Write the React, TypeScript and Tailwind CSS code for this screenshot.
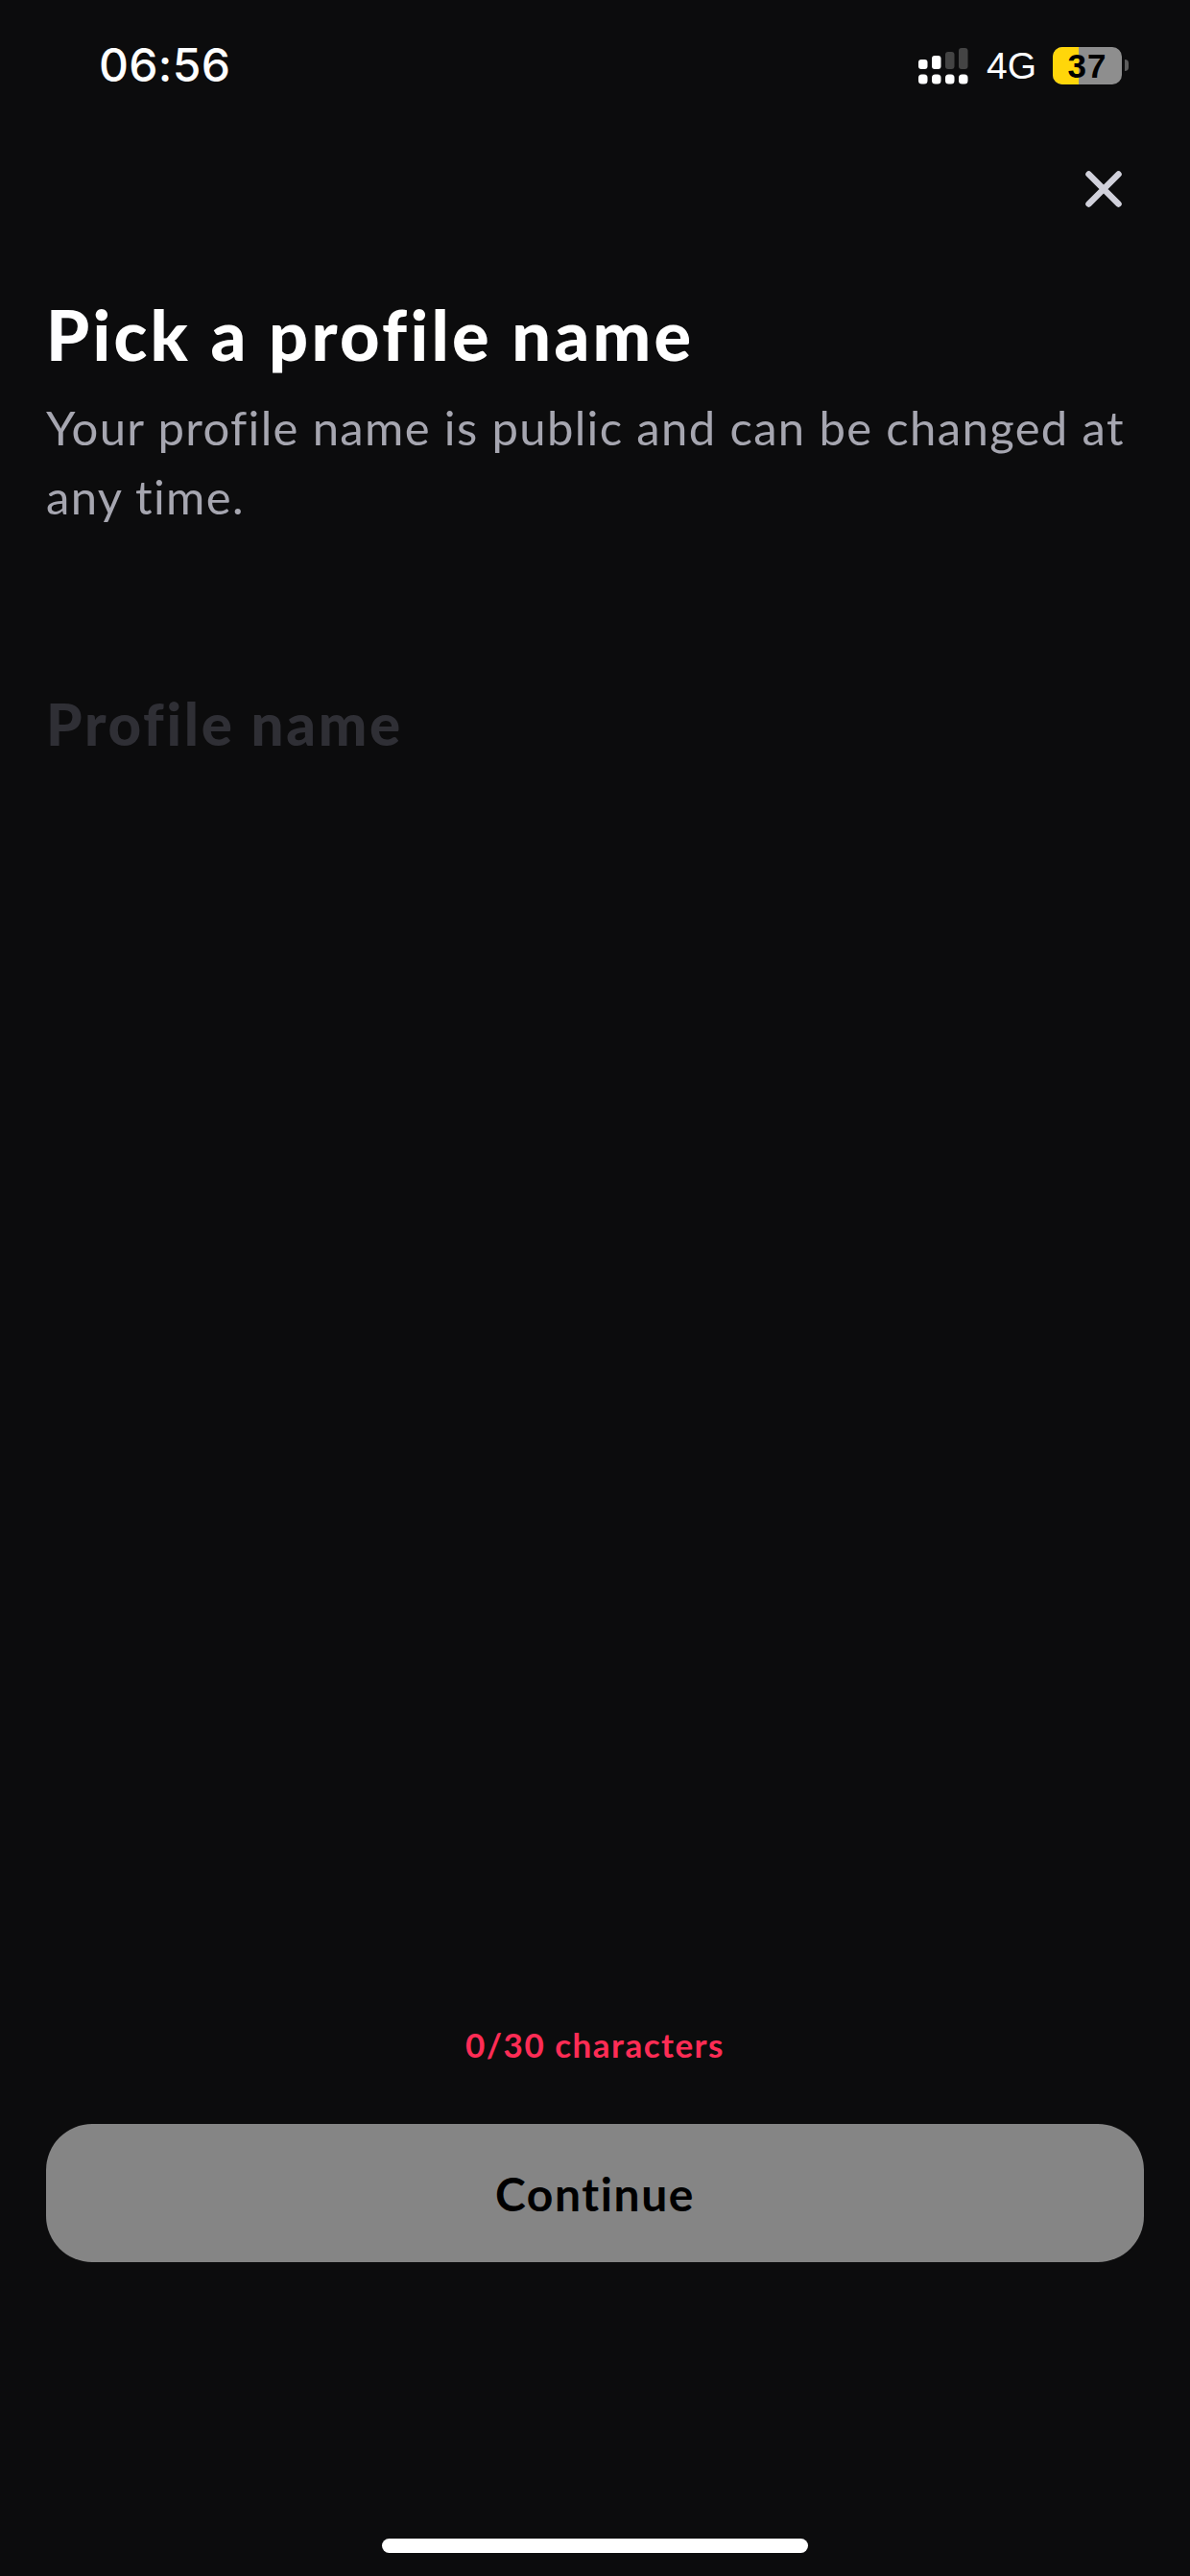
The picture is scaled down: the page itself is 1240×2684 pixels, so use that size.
const sans = "font-['Lato','Noto_Sans',sans-serif]";

function Signal() {
  return (
    <svg width="52" height="38" viewBox="0 0 52 38" className="mt-0.5">
      <rect x="0" y="12" width="9.5" height="10" rx="3" fill="#fff" />
      <rect x="14" y="8" width="9.5" height="14" rx="3" fill="#fff" />
      <rect x="28" y="4" width="9.5" height="18" rx="3" fill="#444" />
      <rect x="42" y="0" width="9.5" height="22" rx="3" fill="#444" />
      <rect x="0" y="27.5" width="9.5" height="10" rx="3.5" fill="#fff" />
      <rect x="14" y="27.5" width="9.5" height="10" rx="3.5" fill="#fff" />
      <rect x="28" y="27.5" width="9.5" height="10" rx="3.5" fill="#fff" />
      <rect x="42" y="27.5" width="9.5" height="10" rx="3.5" fill="#fff" />
    </svg>
  );
}

function Battery() {
  return (
    <div className="flex items-center gap-[3px]">
      <div className="relative flex h-[39px] w-[72px] items-center justify-center overflow-hidden rounded-[10px] bg-[#8e8e8e]">
        <div className="absolute inset-y-0 left-0 w-[27px] bg-[#ffd60a]" />
        <span className="relative font-['Liberation_Sans',sans-serif] text-[35px] leading-none font-bold tracking-[1px] text-black">37</span>
      </div>
      <div className="h-[12px] w-[4px] rounded-r-full bg-[#5c5c5c]" />
    </div>
  );
}

export default function App() {
  return (
    <div className={`flex h-[2684px] w-[1240px] flex-col bg-[#0c0c0d] ${sans}`}>
      <div className="flex h-[178px] items-start justify-between pt-[48px] pr-[64px] pl-[103px]">
        <span className="mt-[1px] font-['Inter',sans-serif] text-[48px] leading-[38px] font-medium tracking-[0.3px] text-white">06:56</span>
        <div className="flex items-center">
          <Signal />
          <span className="mt-[2px] mr-[17px] ml-[19px] font-['Liberation_Sans',sans-serif] text-[39px] leading-[38px] text-white">4G</span>
          <Battery />
        </div>
      </div>

      <div className="flex justify-end pr-[71px]">
        <svg width="38" height="38" viewBox="0 0 38 38" fill="none" stroke="#d1d1db" strokeWidth="6.5" strokeLinecap="round">
          <path d="M3.5 3.5 34.5 34.5M34.5 3.5 3.5 34.5" />
        </svg>
      </div>

      <div className="px-[48px] pt-[90px]">
        <h1 className="text-[72px] leading-[84px] font-black tracking-[3.3px] text-white">Pick a profile name</h1>
        <p className="mt-[19px] text-[49px] leading-[72px] tracking-[1.35px] text-[#a6a6b0]">Your profile name is public and can be changed at any time.</p>
        <div className="mt-[166px] text-[60px] leading-[70px] font-black tracking-[2.7px] text-[#2f2f35]">Profile name</div>
      </div>

      <div className="mt-auto flex flex-col items-center px-[48px] pb-[327px]">
        <div className="text-[35px] leading-[40px] font-bold tracking-[1.5px] text-[#fe2c55]">0/30 characters</div>
        <button className="mt-[63px] flex h-[144px] w-full items-center justify-center rounded-[48px] bg-[#858585] pt-[2px] text-[48px] font-bold tracking-[1.6px] text-black">Continue</button>
      </div>

      <div className="relative">
        <div className="absolute bottom-[24px] left-[398px] h-[15px] w-[444px] rounded-full bg-white" />
      </div>
    </div>
  );
}
